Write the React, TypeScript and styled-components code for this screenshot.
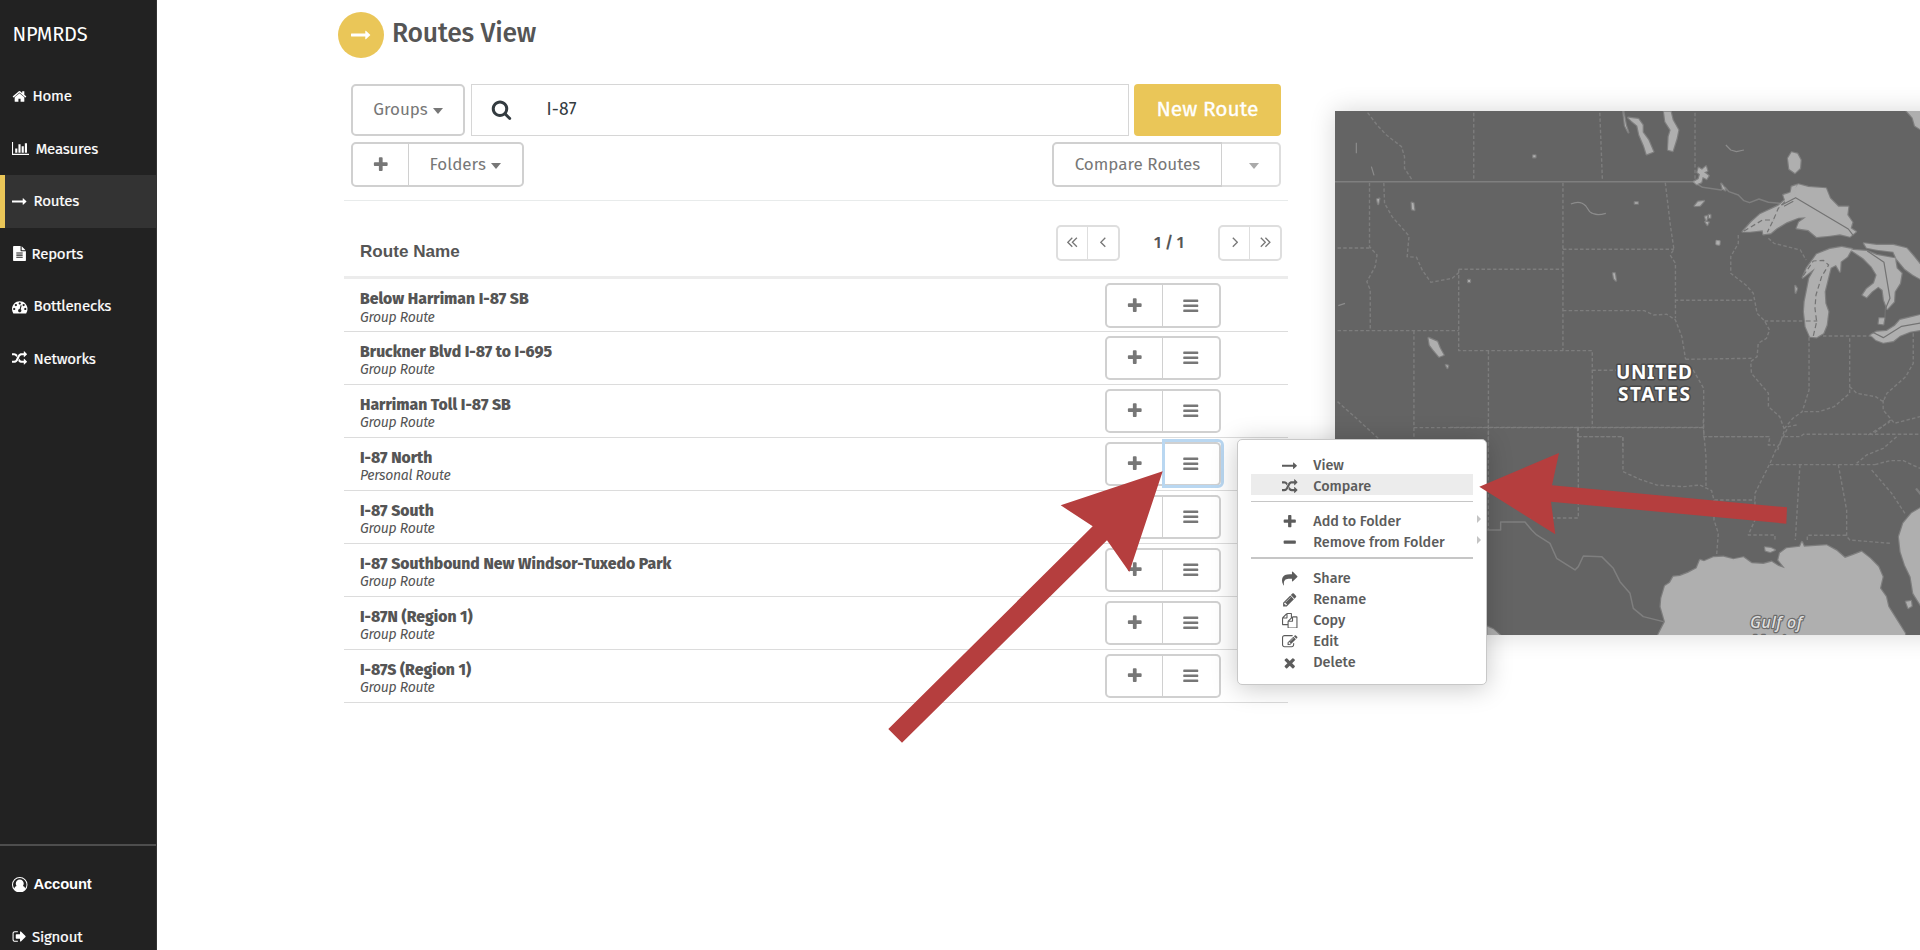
import React from "react";
import styled, { createGlobalStyle, css } from "styled-components";

const GlobalStyle = createGlobalStyle`
  *, *::before, *::after { box-sizing: border-box; }
  body {
    margin: 0;
    background: #fff;
    color: #555;
    font-family: "Fira Sans", "Noto Sans", "Open Sans", sans-serif;
    overflow: hidden;
  }
  p, h1, h2 { margin: 0; }
  button { font-family: inherit; cursor: pointer; }
`;

/* ---------- icons ---------- */

const BAR = "q0 26-19 45t-45 19h-1408q-26 0-45-19t-19-45v-128q0-26 19-45t45-19h1408q26 0 45 19t19 45z";
const FILE_LINE = "v-64q0-14-9-23t-23-9h-704q-14 0-23 9t-9 23v64q0 14 9 23t23 9h704q14 0 23-9t9-23z";
const DOT = "q0-53-37.5-90.5t-90.5-37.5-90.5 37.5-37.5 90.5 37.5 90.5 90.5 37.5 90.5-37.5 37.5-90.5z";

const glyphs = {
  home: { w: 1792, d: "M1472 992v480q0 26-19 45t-45 19h-384v-384h-256v384h-384q-26 0-45-19t-19-45v-480q0-1 .5-3t.5-3l575-474 575 474q1 2 1 6zm223-69l-62 74q-8 9-21 11h-3q-13 0-21-7l-692-577-692 577q-12 8-24 7-13-2-21-11l-62-74q-8-10-7-23.5t11-21.5l719-599q32-26 76-26t76 26l244 204v-195q0-14 9-23t23-9h192q14 0 23 9t9 23v408l219 182q10 8 11 21.5t-7 23.5z" },
  chart: { w: 2048, d: "M640 896v512h-256v-512h256zm384-512v1024h-256v-1024h256zm1024 1152v128h-2048v-1536h128v1408h1920zm-640-896v768h-256v-768h256zm384-384v1152h-256v-1152h256z" },
  arrow: { w: 1792, d: "M1728 893q0 14-10 24l-384 354q-16 14-35 6-19-9-19-29v-224h-1248q-14 0-23-9t-9-23v-192q0-14 9-23t23-9h1248v-224q0-21 19-29t35 5l384 350q10 10 10 23z" },
  file: { w: 1792, d: "M1596 476q14 14 28 36h-472v-472q22 14 36 28zm-476 164h544v1056q0 40-28 68t-68 28h-1344q-40 0-68-28t-28-68v-1600q0-40 28-68t68-28h800v544q0 40 28 68t68 28zm160 736" + FILE_LINE + "m0-256" + FILE_LINE + "m0-256" + FILE_LINE },
  gauge: { w: 1792, d: "M384 1152" + DOT + "m192-448" + DOT + "m428 481l101-382q6-26-7.5-48.5t-38.5-29.5-48 6.5-30 39.5l-101 382q-60 5-107 43.5t-63 98.5q-20 77 20 146t117 89 146-20 89-117q16-60-6-117t-72-91zM1664 1152" + DOT + "M1024 512" + DOT + "M1472 704" + DOT + "M1792 1152q0 261-141 483-19 29-54 29h-1402q-35 0-54-29-141-221-141-483 0-182 71-348t191-286 286-191 348-71 348 71 286 191 191 286 71 348z" },
  random: { w: 1792, d: "M666 481q-60 92-137 273-22-45-37-72.5t-40.5-63.5-51-56.5-63-35-81.5-14.5h-224q-14 0-23-9t-9-23v-192q0-14 9-23t23-9h224q250 0 410 225zm1126 799q0 14-9 23l-320 320q-9 9-23 9-13 0-22.5-9.5t-9.5-22.5v-192q-32 0-85 .5t-81 1-73-1-71-5-64-10.5-63-18.5-58-28.5-59-40-55-53.5-56-69.5q59-93 136-273 22 45 37 72.5t40.5 63.5 51 56.5 63 35 81.5 14.5h256v-192q0-14 9-23t23-9q12 0 24 10l319 319q9 9 9 23zm0-896q0 14-9 23l-320 320q-9 9-23 9-13 0-22.5-9.5t-9.5-22.5v-192h-256q-48 0-87 15t-69 45-51 61.5-45 77.5q-32 62-78 171-29 66-49.5 111t-54 105-64 100-74 83-90 68.5-106.5 42-128 16.5h-224q-14 0-23-9t-9-23v-192q0-14 9-23t23-9h224q48 0 87-15t69-45 51-61.5 45-77.5q32-62 78-171 29-66 49.5-111t54-105 64-100 74-83 90-68.5 106.5-42 128-16.5h256v-192q0-14 9-23t23-9q12 0 24 10l319 319q9 9 9 23z" },
  user: { w: 1792, d: "M896 0a896 896 0 1 0 0 1792a896 896 0 1 0 0-1792zM896 128a768 768 0 0 1 640 1192q-70-240-270-290q90-110 90-270q0-190-134-324t-326-134-326 134-134 324q0 160 90 270q-200 50-270 290a768 768 0 0 1 640-1192z" },
  signout: { w: 1664, d: "M704 1440q0 4 1 20t.5 26.5-3 23.5-10 19.5-20.5 6.5h-320q-119 0-203.5-84.5t-84.5-203.5v-704q0-119 84.5-203.5t203.5-84.5h320q13 0 22.5 9.5t9.5 22.5q0 4 1 20t.5 26.5-3 23.5-10 19.5-20.5 6.5h-320q-66 0-113 47t-47 113v704q0 66 47 113t113 47h312l11.5 1 11.5 3 8 5.5 7 9 2 13.5zm928-544q0 26-19 45l-544 544q-19 19-45 19t-45-19-19-45v-288h-448q-26 0-45-19t-19-45v-384q0-26 19-45t45-19h448v-288q0-26 19-45t45-19 45 19l544 544q19 19 19 45z" },
  search: { w: 1792, d: "M1216 832q0-185-131.5-316.5t-316.5-131.5-316.5 131.5-131.5 316.5 131.5 316.5 316.5 131.5 316.5-131.5 131.5-316.5zm512 832q0 52-38 90t-90 38q-54 0-90-38l-343-342q-179 124-399 124-143 0-273.5-55.5t-225-150-150-225-55.5-273.5 55.5-273.5 150-225 225-150 273.5-55.5 273.5 55.5 225 150 150 225 55.5 273.5q0 220-124 399l343 343q37 37 37 90z" },
  plus: { w: 1792, d: "M1600 736v192q0 40-28 68t-68 28h-416v416q0 40-28 68t-68 28h-192q-40 0-68-28t-28-68v-416h-416q-40 0-68-28t-28-68v-192q0-40 28-68t68-28h416v-416q0-40 28-68t68-28h192q40 0 68 28t28 68v416h416q40 0 68 28t28 68z" },
  minus: { w: 1792, d: "M1600 736v192q0 40-28 68t-68 28h-1216q-40 0-68-28t-28-68v-192q0-40 28-68t68-28h1216q40 0 68 28t28 68z" },
  bars: { w: 1792, d: "M1664 1344v128" + BAR + "m0-512v128" + BAR + "m0-512v128" + BAR },
  share: { w: 1792, d: "M1792 640q0 26-19 45l-512 512q-19 19-45 19t-45-19-19-45v-256h-224q-98 0-175.5 6t-154 21.5-133 42.5-105.5 69.5-80 101-48.5 138.5-17.5 181q0 55 5 123 0 6 2.5 23.5t2.5 26.5q0 15-8.5 25t-23.5 10q-16 0-28-17-7-9-13-22t-13.5-30-10.5-24q-127-285-127-451 0-199 53-333 162-403 875-403h224v-256q0-26 19-45t45-19 45 19l512 512q19 19 19 45z" },
  pencil: { w: 1792, d: "M491 1536l91-91-235-235-91 91v107h128v128h107zm523-928q0-22-22-22-10 0-17 7l-542 542q-7 7-7 17 0 22 22 22 10 0 17-7l542-542q7-7 7-17zm-54-192l416 416-832 832h-416v-416zm683 96q0 53-37 90l-166 166-416-416 166-165q36-38 90-38 53 0 91 38l235 234q37 39 37 91z" },
  copy: { w: 1792, d: "M1696 384q40 0 68 28t28 68v1216q0 40-28 68t-68 28h-960q-40 0-68-28t-28-68v-288h-544q-40 0-68-28t-28-68v-672q0-40 20-88t48-76l408-408q28-28 76-48t88-20h416q40 0 68 28t28 68v328q68-40 128-40h416zm-544 213l-299 299h299v-299zm-640-384l-299 299h299v-299zm196 647l316-316v-416h-384v416q0 40-28 68t-68 28h-416v640h512v-256q0-40 20-88t48-76zm956 804v-1152h-384v416q0 40-28 68t-68 28h-416v640h896z" },
  edit: { w: 1792, d: "M888 1184l116-116-152-152-116 116v56h96v96h56zm440-720q-16-16-33 1l-350 350q-17 17-1 33t33-1l350-350q17-17 1-33zm80 594v190q0 119-84.5 203.5t-203.5 84.5h-832q-119 0-203.5-84.5t-84.5-203.5v-832q0-119 84.5-203.5t203.5-84.5h832q63 0 117 25 15 7 18 23 3 17-9 29l-49 49q-14 14-32 8-23-6-45-6h-832q-66 0-113 47t-47 113v832q0 66 47 113t113 47h832q66 0 113-47t47-113v-126q0-13 9-22l64-64q15-15 35-7t20 29zm-96-738l288 288-672 672h-288v-288zm444 132l-92 92-288-288 92-92q28-28 68-28t68 28l152 152q28 28 28 68t-28 68z" },
  times: { w: 1792, d: "M1490 1322q0 40-28 68l-136 136q-28 28-68 28t-68-28l-294-294-294 294q-28 28-68 28t-68-28l-136-136q-28-28-28-68t28-68l294-294-294-294q-28-28-28-68t28-68l136-136q28-28 68-28t68 28l294 294 294-294q28-28 68-28t68 28l136 136q28 28 28 68t-28 68l-294 294 294 294q28 28 28 68z" },
};

type GlyphName = keyof typeof glyphs;

const IconSvg = styled.svg`
  display: block;
  flex: none;
  fill: currentColor;
`;

function Icon({ name, size }: { name: GlyphName; size: number }) {
  const g = glyphs[name];
  return (
    <IconSvg width={(size * g.w) / 1792} height={size} viewBox={`0 0 ${g.w} 1792`} fillRule="evenodd">
      <path d={g.d} />
    </IconSvg>
  );
}

const ChevronSvg = styled.svg`
  display: block;
  fill: none;
  stroke: #777;
  stroke-width: 1.3;
`;

function Chevron({ dir, double }: { dir: "left" | "right"; double?: boolean }) {
  const one = dir === "left" ? "M5.3 .8L.8 5.3L5.3 9.8" : "M.8 .8L5.3 5.3L.8 9.8";
  return (
    <ChevronSvg width={double ? 11 : 6} height={11} viewBox={double ? "0 0 11 11" : "0 0 6 11"}>
      <path d={one} />
      {double && <path d={one} transform="translate(4.6 0)" />}
    </ChevronSvg>
  );
}

/* ---------- sidebar ---------- */

const Shell = styled.div`
  display: flex;
  position: relative;
  width: 1920px;
  height: 950px;
  overflow: hidden;
`;

const Sidebar = styled.nav`
  flex: none;
  width: 157px;
  height: 950px;
  display: flex;
  flex-direction: column;
  background: #222;
  border-right: 1px solid #333;
  color: #fff;
`;

const Brand = styled.div`
  height: 70px;
  padding-left: 12.5px;
  line-height: 69px;
  font-size: 20px;
  letter-spacing: -0.2px;
`;

const NavItem = styled.a<{ $active?: boolean; $heavy?: boolean; $gap?: number }>`
  display: flex;
  align-items: center;
  gap: ${(p) => p.$gap ?? 7}px;
  flex: none;
  height: 52.5px;
  padding-left: ${(p) => (p.$active ? 7 : 12)}px;
  border-left: ${(p) => (p.$active ? "5px solid #eac658" : "none")};
  background: ${(p) => (p.$active ? "#333" : "transparent")};
  font-size: 15px;
  font-weight: 400;
  letter-spacing: -0.2px;
  -webkit-text-stroke: 0.2px #fff;
  ${(p) =>
    p.$heavy &&
    css`
      font-family: "Liberation Sans", Arial, sans-serif;
      font-size: 14.8px;
      font-weight: 700;
      letter-spacing: -0.15px;
      -webkit-text-stroke: 0;
    `}
`;

const NavBottom = styled.div`
  margin-top: auto;
  height: 106px;
  padding-top: 12px;
  border-top: 2px solid #4e4e4e;
`;

/* ---------- main column ---------- */

const Main = styled.main`
  flex: none;
  width: 944px;
  margin-left: 187px;
  padding-top: 11px;
`;

const Title = styled.header`
  display: flex;
  align-items: center;
  gap: 8px;
  height: 47px;
  margin-left: -6px;
`;

const Badge = styled.span`
  display: flex;
  align-items: center;
  justify-content: center;
  width: 46px;
  height: 46px;
  border-radius: 50%;
  background: #eac658;
  color: #fff;
`;

const TitleText = styled.h1`
  font-size: 26.5px;
  font-weight: 500;
  line-height: 36px;
  letter-spacing: -0.2px;
  margin-top: -3px;
`;

const Toolbar = styled.div<{ $top: number; $h: number }>`
  display: flex;
  align-items: stretch;
  gap: 5.5px;
  height: ${(p) => p.$h}px;
  margin: ${(p) => p.$top}px 7px 0 7px;
`;

const Button = styled.button<{ $w: number; $dim?: boolean }>`
  display: flex;
  align-items: center;
  justify-content: center;
  gap: 5px;
  width: ${(p) => p.$w}px;
  padding: 0;
  border: 2px solid ${(p) => (p.$dim ? "#dedede" : "#d0d0d0")};
  border-radius: 5px;
  background: #fff;
  color: ${(p) => (p.$dim ? "#aaa" : "#777")};
  font-size: 17px;
`;

const Group = styled.div<{ $push?: boolean; $h?: number }>`
  display: flex;
  height: ${(p) => (p.$h ? p.$h + "px" : "auto")};
  margin-left: ${(p) => (p.$push ? "auto" : "0")};
  ${Button}:first-child { border-top-right-radius: 0; border-bottom-right-radius: 0; border-right-width: 1px; }
  ${Button}:last-child { border-top-left-radius: 0; border-bottom-left-radius: 0; border-left-width: 0; }
`;

const Caret = styled.span<{ $shift?: number }>`
  width: 0;
  height: 0;
  margin: 3px 0 0 ${(p) => p.$shift ?? 0}px;
  border-left: 5px solid transparent;
  border-right: 5px solid transparent;
  border-top: 6px solid currentColor;
`;

const SearchBox = styled.div`
  display: flex;
  align-items: center;
  flex: 1;
  gap: 35px;
  padding-left: 19px;
  border: 1.4px solid #d6d6d6;
  color: #333b40;
  font-size: 17.5px;
`;

const Query = styled.span`
  letter-spacing: 0.2px;
`;

const Primary = styled.button`
  width: 147px;
  padding: 0 0 2px;
  border: 0;
  border-radius: 4px;
  background: #eac658;
  color: #fff;
  font-size: 21px;
  font-weight: 400;
  -webkit-text-stroke: 0.3px #fff;
`;

const TableHead = styled.div`
  display: flex;
  justify-content: space-between;
  height: 79px;
  margin-top: 13px;
  padding: 24px 6px 0 16px;
  border-top: 1px solid #e8ebeb;
  border-bottom: 3px solid #ececec;
`;

const HeadText = styled.h2`
  padding-top: 16.5px;
  font: 700 17.1px/20px "Liberation Sans", Arial, sans-serif;
`;

const Pager = styled.div`
  display: flex;
  align-items: center;
  height: 35.5px;
`;

const PageCount = styled.span`
  width: 98px;
  text-align: center;
  font-size: 15.5px;
  font-weight: 600;
`;

const Row = styled.div`
  position: relative;
  display: flex;
  justify-content: space-between;
  height: 52.97px;
  padding: 4px 67px 0 16px;
  border-bottom: 1px solid #dcdcdc;
`;

const RouteName = styled.p`
  margin-top: 5px;
  font-size: 15.75px;
  font-weight: 800;
  line-height: 21.5px;
  white-space: nowrap;
`;

const RouteKind = styled.p`
  font-size: 14px;
  font-style: italic;
  line-height: 15px;
  letter-spacing: -0.3px;
`;

const FocusRing = styled.div`
  position: absolute;
  left: 817.5px;
  top: 1.5px;
  width: 62.5px;
  height: 49px;
  border: 3px solid #b9d7f1;
  border-radius: 0 6px 6px 0;
  pointer-events: none;
`;

/* ---------- context menu ---------- */

const Menu = styled.div`
  position: absolute;
  z-index: 2;
  left: 892.8px;
  top: 0.8px;
  width: 250.5px;
  height: 246px;
  padding: 12.8px 13px 0;
  border: 1.5px solid #c8c8c8;
  border-radius: 5px;
  background: #fff;
  box-shadow: 0 3px 26px rgba(0, 0, 0, 0.22);
`;

const MenuItem = styled.div<{ $on?: boolean }>`
  position: relative;
  display: flex;
  align-items: center;
  height: 21px;
  padding: 5px 0 0 31.5px;
  gap: 15.5px;
  background: ${(p) => (p.$on ? "#ececec" : "none")};
  color: #5c5c5c;
  font-size: 14.4px;
  font-weight: 500;
  line-height: 16px;
  white-space: nowrap;
`;

const MenuRule = styled.div`
  height: 1.5px;
  margin: 6px 0 7px;
  background: #c6c6c6;
`;

const SubMark = styled.span`
  position: absolute;
  right: -8px;
  top: 6px;
  border: 4px solid transparent;
  border-left-color: #c4c4c4;
  border-right-width: 0;
`;

/* ---------- map ---------- */

const MapPanel = styled.section`
  flex: none;
  width: 640px;
  height: 524px;
  margin: 111px 0 0 47px;
  background: #646464;
  box-shadow: 0 0 24px rgba(0, 0, 0, 0.16);
`;

const MapSvg = styled.svg`
  display: block;
  .water { fill: #afafaf; stroke: rgba(175, 175, 175, 0.35); stroke-width: 2.4; }
  .state { fill: none; stroke: #7d7d7d; stroke-width: 1.4; stroke-dasharray: 3.5 2.2; }
  .border { fill: none; stroke: #7f7f7f; stroke-width: 1.5; }
  .inlake { fill: none; stroke: #737373; stroke-width: 1.2; }
  .river { fill: none; stroke: #8c8c8c; stroke-width: 1.2; }
  path { vector-effect: non-scaling-stroke; stroke-linejoin: round; }
  text { fill: #fff; font-family: "Noto Sans", "Open Sans", sans-serif; paint-order: stroke; stroke: #4a4a4a; stroke-width: 3px; stroke-linejoin: round; }
  .sea { fill: #dedede; stroke: #6c6c6c; stroke-width: 2.4px; }
`;

function RegionMap() {
  return (
    <MapSvg width="640" height="524" viewBox="1335 111 640 524">
      <g transform="translate(1330 100) scale(.3763 .3333)">
        <path className="border" d="M13 245H965L990 262L1040 270L1050 262L1060 275L1085 285L1100 302L1115 308L1140 297L1165 307L1195 310" />
        <path className="state" d="M100 38L125 75L150 105L190 140L198 170V205L220 243M382 38V243M717 38L724 243M970 38V240M105 248V440L125 465L120 500L98 545L107 570V692M20 444H105M143 248L145 310L165 350L210 408L205 470L230 472L245 510L268 547L325 535L342 518M342 508V752H697V983M342 508H619M619 248V752M619 448H914M619 632H835L860 645L895 643L918 660L935 710L945 778M891 248L905 380L914 448L904 465L918 490V655M916 601H1125M20 692H342M223 692V1017M223 983H992M421 752V1050M697 811H760M945 778L1120 775M965 810L993 865V1010H1160M658 983V1050M658 1010H778V1050M20 905L75 960L130 1017" />
        <path className="state" d="M1085 405V430L1065 470V520L1105 555L1125 580L1135 640L1155 663L1168 690L1160 715L1138 730L1135 770L1118 785L1120 820L1165 880V920L1195 950L1208 990L1190 1050M1155 663H1260M1165 415L1180 430L1250 450L1265 480M1273 712V870L1255 935L1230 955L1208 985M1310 708H1440M1381 715V880L1340 920L1300 935L1255 935M1381 860L1400 880L1450 890L1470 905L1480 880L1530 830L1550 790V680M1470 900V930L1500 970L1568 950M1490 960L1440 1005M1208 1010H1250L1258 1003H1568" />
        <path className="water" d="M262 714L285 725L292 745L302 765L290 770L275 750L265 735Z" />
        <path className="water" d="M217 308L222 310L224 330L218 328ZM367 540h5v6h-5zM308 795l6 2-2 7zM540 166h6v6h-6zM810 307h8v4h-8zM752 520h5l3 22-5-6zM125 298l6-2-3 16zM1028 424h7v9h-7z" />
        <path className="river" d="M640 312Q665 300 680 318L690 335Q705 350 733 340M1052 135L1065 150L1080 155L1100 150M110 200L117 226M70 128V160M22 617L40 610" />
      </g>
      <g transform="translate(1600 105) scale(.3333)">
        <path className="water" d="M428 380L455 350L480 328L535 302L555 285L550 270L575 262L595 238L625 246L678 250L690 280L715 305L745 305L742 330L757 352L752 370L768 380L750 395L720 388L690 392L650 396L625 375L590 370L597 352L618 337L595 338L560 352L530 370L512 385L490 388L488 376L450 380Z" />
        <path className="water" d="M650 448L690 432L725 426L755 432L742 455L722 470L720 500L708 480L692 488L684 520L674 560L676 595L685 620L680 660L670 685L650 697L630 695L617 665L612 620L614 590L620 560L628 520L645 490L608 518L620 490L640 462Z" />
        <path className="water" d="M752 434L800 438L830 450L885 460L890 490L905 505L900 535L884 560L882 590L862 612L852 585L848 555L835 545L815 560L800 577L788 570L800 552L822 535L830 510L815 485L790 460Z" />
        <path className="water" d="M792 415L830 420L880 420L920 430L942 455L962 480V522L940 510L915 492L890 462L880 440L830 434L800 428Z" />
        <path className="water" d="M812 690L830 680L860 678L885 662L900 645L940 635L962 630V675L930 680L900 692L880 708L850 713L828 705ZM838 640L853 640L850 658L836 656Z" />
        <path className="water" d="M85 38L115 42L128 60L128 82L145 105L160 140L140 148L132 122L118 90L112 62L95 48Z M192 20H212L218 45L235 75L230 100L218 138L204 134L206 95L212 75L196 50Z M920 18H965V75L945 62L938 38Z" />
        <path className="water" d="M564 160L575 142L592 146L602 165L600 190L585 204L568 192ZM575 245L590 240L580 268L572 265Z" />
        <path className="water" d="M70 20L75 62L85 82L78 62ZM284 303L294 290L312 288L300 302ZM315 335l7-2-3 14zM316 350l10 2-4 8zM327 330h4v8h-4zM350 408l8 2-2 9-7-3zM586 543l5 8-4 12zM296 188l10 6 12-10 4 14-10 4 14 10-6 10-12-6-4 16-14 6-8-8 14-8 4-14-8-6zM364 236l6 8 6 12-8-6z" />
        <path className="inlake" strokeDasharray="5 3" d="M432 378L488 345H520M555 290L535 310L520 345L502 382M610 512L640 468L670 466L686 480L665 515L648 570L645 610L650 650L640 693M617 648H652" />
        <path className="inlake" d="M545 300L587 278L745 372L760 392M552 304L580 289M802 438L852 472L870 580L856 612L855 638M818 682L850 698L905 664L962 654" />
      </g>
      <g transform="translate(1450 420) scale(.3333)">
        <path className="state" d="M115 0V330M0 22H760M385 22V294H240M385 50H519V155L570 178L620 195L700 200L750 195L785 212L792 240H915M760 0V22L768 110V205M760 50H960L955 75H975M792 240V300L805 340L800 405M1040 15L1015 20L1000 50L975 95L960 130L935 180L915 220V300L895 345H975V365M960 134H1275M1050 134L1036 360M1165 134L1190 270V350L1200 360L1320 370M1340 50L1300 85L1250 105L1220 130M1275 134L1320 122H1360L1410 145M1265 150L1325 220L1368 285M1072 360V346H1190M1255 45L1320 5" />
        <path className="border" d="M112 330H152V306H225L245 330L260 345L300 370L320 415L375 450L385 440L400 408L455 410L490 445L510 485L540 520L550 565L580 590L640 605" />
        <path className="water" d="M622 650L645 605L632 560L634 535L645 498L660 488L670 470L690 468L715 458L740 445L750 420L762 424L790 412L820 410L850 418L880 412L905 430L940 432L965 425L985 438L1005 445L985 420L990 400L1010 385L1050 380L1056 366L1062 380L1130 376L1160 392L1185 414L1210 405L1235 395L1260 415L1285 440L1298 470L1290 505L1308 530L1315 560L1340 600L1365 640L1365 650Z" />
        <path className="water" d="M1415 262L1385 280L1360 310L1347 350L1352 395L1365 435L1382 470L1390 520L1415 560Z M112 620L130 628L155 650H112ZM1368 545l15-2 2 15-10 6zM945 382l18 2 12 6-14 6-14-4zM1400 208l12 14z" />
      </g>
      <text x="1616" y="378.5" fontSize="19" fontWeight="700" textLength="76">UNITED</text>
      <text x="1618" y="400.5" fontSize="19" fontWeight="700" textLength="72">STATES</text>
      <text className="sea" x="1750" y="628" fontSize="16" fontStyle="italic" fontWeight="500" textLength="52">Gulf of</text>
      <text className="sea" x="1751" y="646.5" fontSize="16" fontStyle="italic" fontWeight="500">Mexico</text>
    </MapSvg>
  );
}

/* ---------- pointer arrows ---------- */

const Arrows = styled.svg`
  position: absolute;
  inset: 0;
  z-index: 3;
  fill: #b53e3e;
  pointer-events: none;
`;

/* ---------- data ---------- */

const nav: { icon: GlyphName; size: number; label: string; gap?: number; active?: boolean }[] = [
  { icon: "home", size: 15, label: "Home", gap: 5.5 },
  { icon: "chart", size: 15, label: "Measures", gap: 6.5 },
  { icon: "arrow", size: 15, label: "Routes", gap: 6.5, active: true },
  { icon: "file", size: 15, label: "Reports", gap: 4.5 },
  { icon: "gauge", size: 15.5, label: "Bottlenecks", gap: 6 },
  { icon: "random", size: 15, label: "Networks", gap: 6.5 },
];

const routes: [string, string][] = [
  ["Below Harriman I-87 SB", "Group Route"],
  ["Bruckner Blvd I-87 to I-695", "Group Route"],
  ["Harriman Toll I-87 SB", "Group Route"],
  ["I-87 North", "Personal Route"],
  ["I-87 South", "Group Route"],
  ["I-87 Southbound New Windsor-Tuxedo Park", "Group Route"],
  ["I-87N (Region 1)", "Group Route"],
  ["I-87S (Region 1)", "Group Route"],
];

const menu: { icon: GlyphName; label: string; on?: boolean; sub?: boolean }[][] = [
  [{ icon: "arrow", label: "View" }, { icon: "random", label: "Compare", on: true }],
  [{ icon: "plus", label: "Add to Folder", sub: true }, { icon: "minus", label: "Remove from Folder", sub: true }],
  [
    { icon: "share", label: "Share" },
    { icon: "pencil", label: "Rename" },
    { icon: "copy", label: "Copy" },
    { icon: "edit", label: "Edit" },
    { icon: "times", label: "Delete" },
  ],
];

function ContextMenu() {
  return (
    <Menu>
      {menu.map((section, i) => (
        <React.Fragment key={i}>
          {i > 0 && <MenuRule />}
          {section.map((m) => (
            <MenuItem key={m.label} $on={m.on}>
              <Icon name={m.icon} size={15.5} />
              {m.label}
              {m.sub && <SubMark />}
            </MenuItem>
          ))}
        </React.Fragment>
      ))}
    </Menu>
  );
}

export default function App() {
  return (
    <>
      <GlobalStyle />
      <Shell>
        <Sidebar>
          <Brand>NPMRDS</Brand>
          {nav.map((n) => (
            <NavItem key={n.label} $active={n.active} $gap={n.gap}>
              <Icon name={n.icon} size={n.size} />
              {n.label}
            </NavItem>
          ))}
          <NavBottom>
            <NavItem $heavy $gap={6}>
              <Icon name="user" size={15.5} />
              Account
            </NavItem>
            <NavItem $gap={6}>
              <Icon name="signout" size={15} />
              Signout
            </NavItem>
          </NavBottom>
        </Sidebar>

        <Main>
          <Title>
            <Badge>
              <Icon name="arrow" size={20} />
            </Badge>
            <TitleText>Routes View</TitleText>
          </Title>

          <Toolbar $top={25.5} $h={52}>
            <Button $w={114}>
              Groups <Caret />
            </Button>
            <SearchBox>
              <Icon name="search" size={21} />
              <Query>I-87</Query>
            </SearchBox>
            <Primary>New Route</Primary>
          </Toolbar>

          <Toolbar $top={6.5} $h={45}>
            <Group>
              <Button $w={57.5}>
                <Icon name="plus" size={17.5} />
              </Button>
              <Button $w={115.5}>
                Folders <Caret />
              </Button>
            </Group>
            <Group $push>
              <Button $w={170}>Compare Routes</Button>
              <Button $w={59} $dim>
                <Caret $shift={6} />
              </Button>
            </Group>
          </Toolbar>

          <TableHead>
            <HeadText>Route Name</HeadText>
            <Pager>
              <Group $h={35.5}>
                <Button $w={32} $dim><Chevron dir="left" double /></Button>
                <Button $w={32} $dim><Chevron dir="left" /></Button>
              </Group>
              <PageCount>1 / 1</PageCount>
              <Group $h={35.5}>
                <Button $w={32} $dim><Chevron dir="right" /></Button>
                <Button $w={32} $dim><Chevron dir="right" double /></Button>
              </Group>
            </Pager>
          </TableHead>

          {routes.map(([name, kind], i) => (
            <Row key={name}>
              <div>
                <RouteName>{name}</RouteName>
                <RouteKind>{kind}</RouteKind>
              </div>
              <Group $h={44.5}>
                <Button $w={57.5}>
                  <Icon name="plus" size={17.5} />
                </Button>
                <Button $w={58.5}>
                  <Icon name="bars" size={17.5} />
                </Button>
              </Group>
              {i === 3 && (
                <>
                  <FocusRing />
                  <ContextMenu />
                </>
              )}
            </Row>
          ))}
        </Main>

        <MapPanel>
          <RegionMap />
        </MapPanel>

        <Arrows width="1920" height="950" viewBox="0 0 1920 950">
          <path d="M1162.7 471.3L1060.7 505.3L1092.7 526.3L888.3 729L902 742.7L1107 540.3L1129.3 572Z" />
          <path d="M1479.3 486.7L1559 453L1552 485.3L1787 507.3L1786.3 523.7L1551 501.7L1555.3 534.3Z" />
        </Arrows>
      </Shell>
    </>
  );
}
